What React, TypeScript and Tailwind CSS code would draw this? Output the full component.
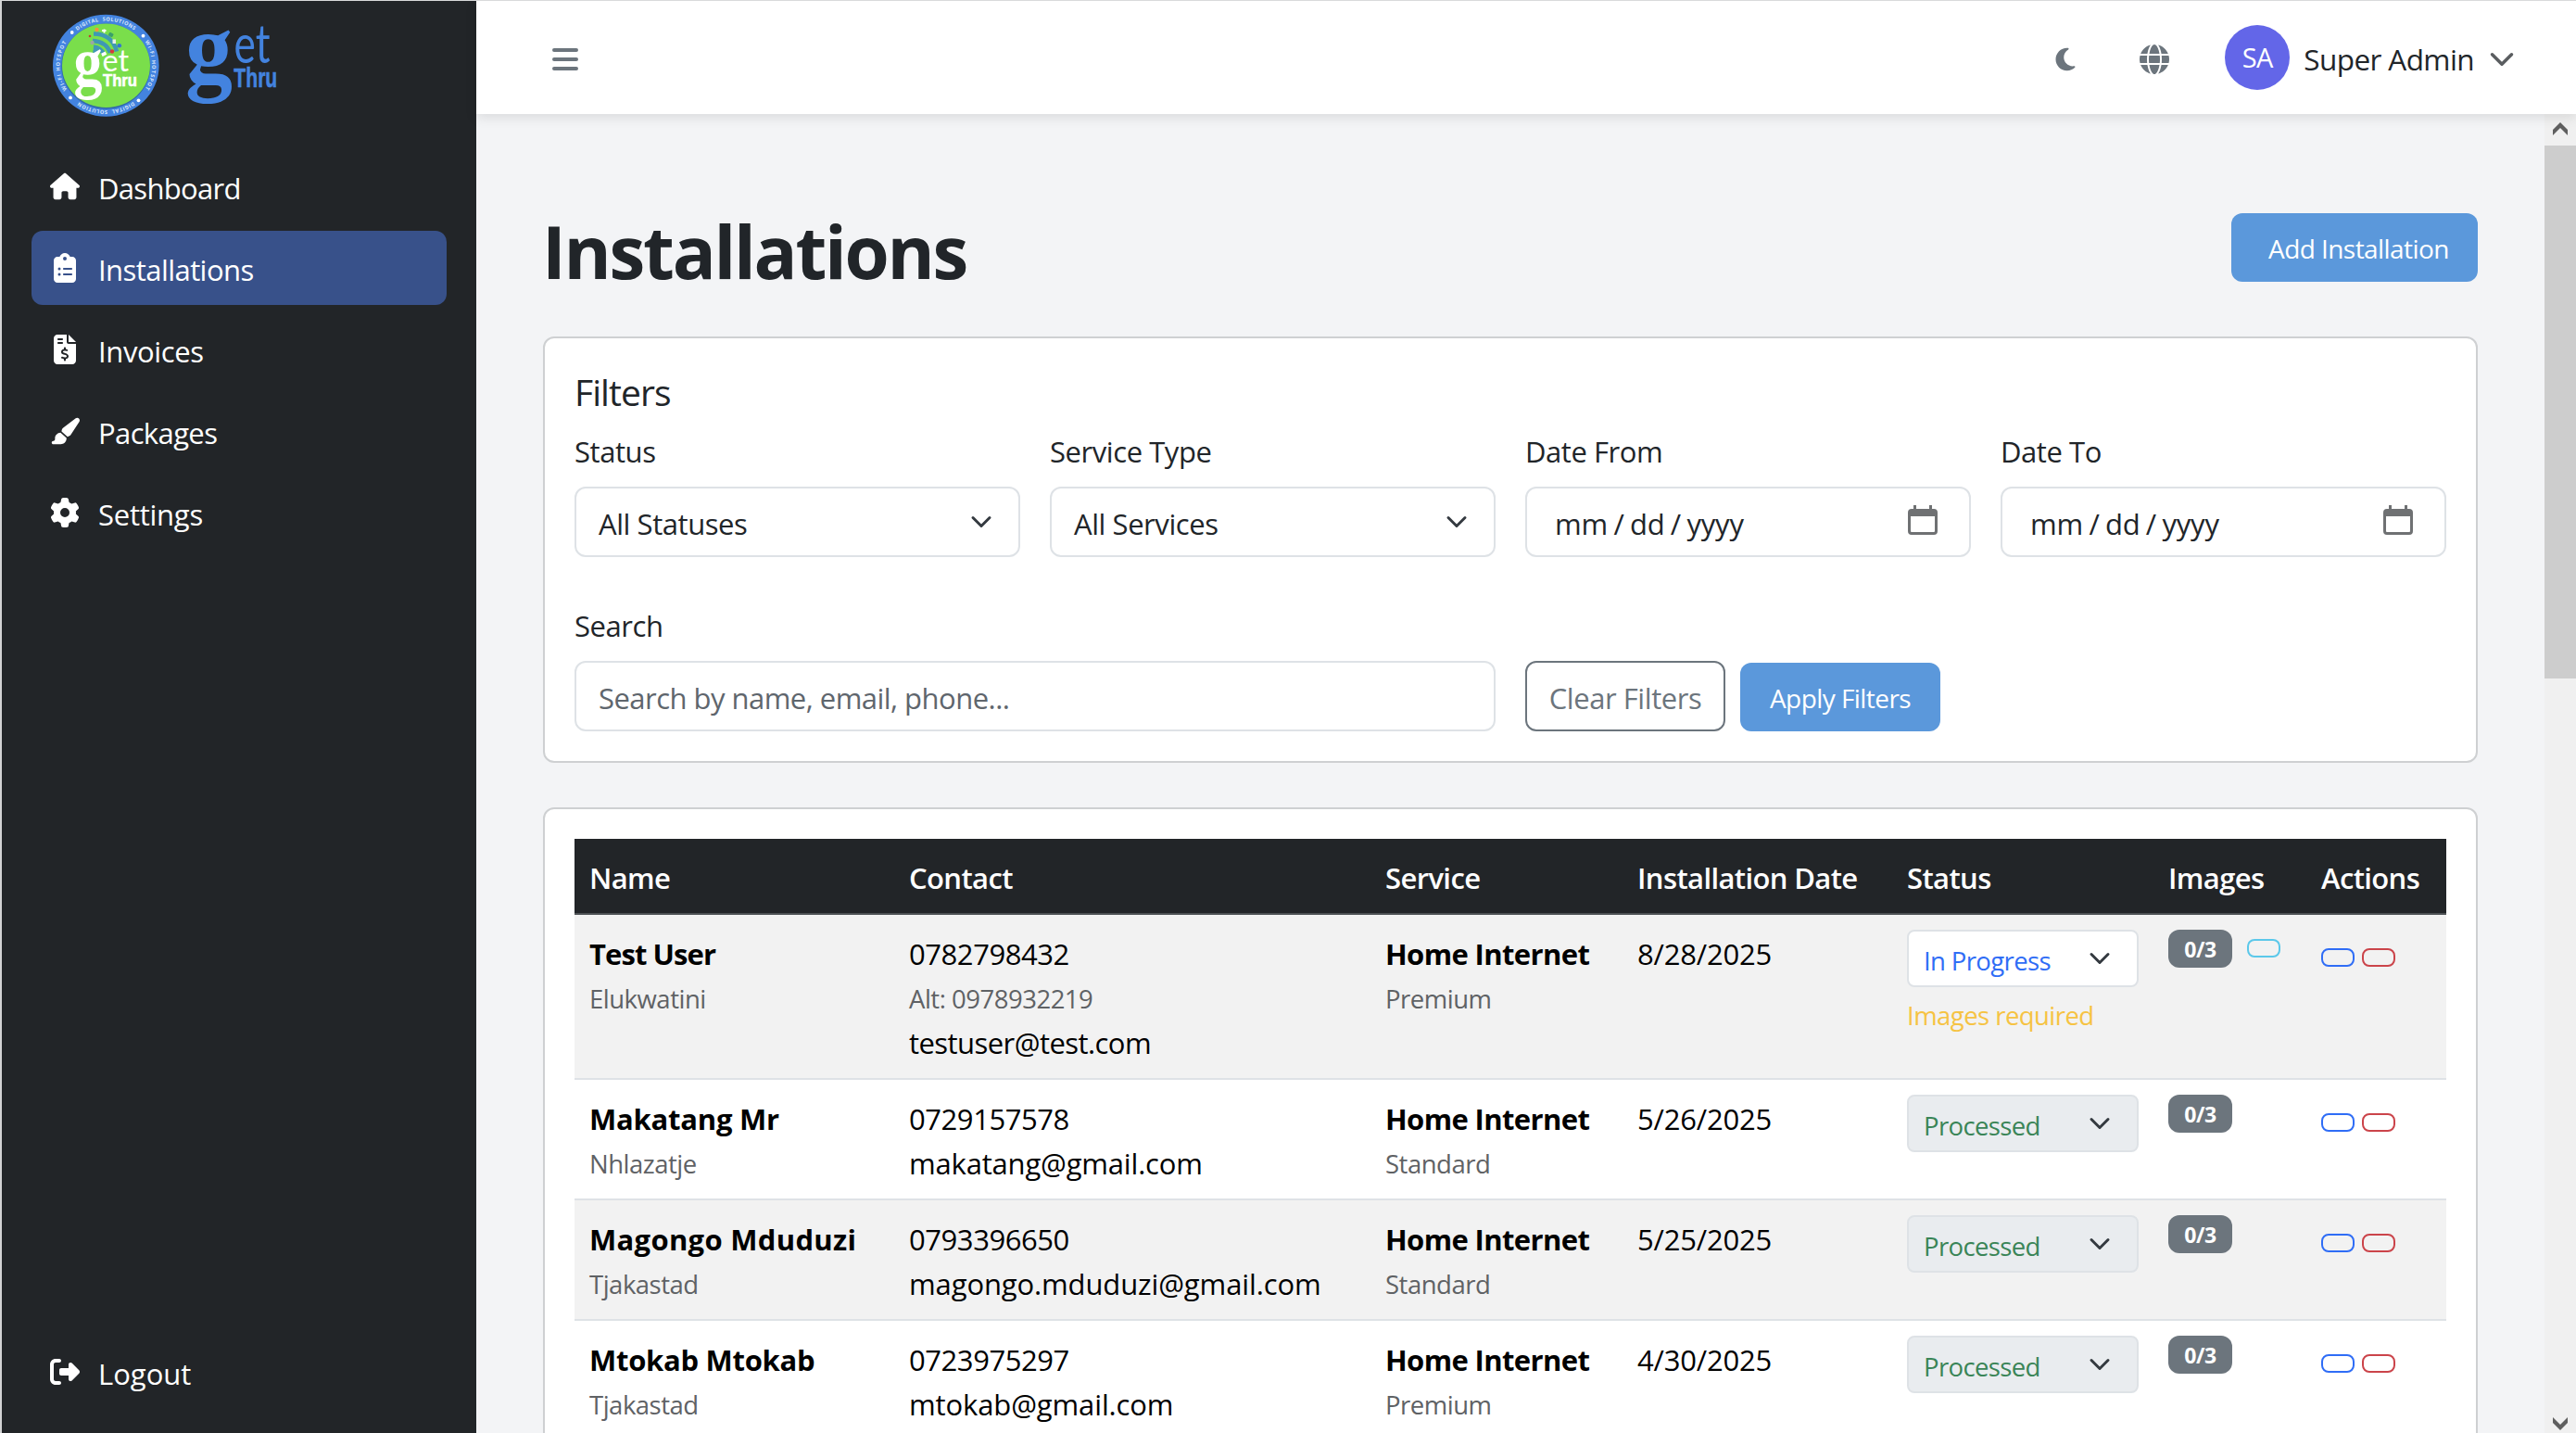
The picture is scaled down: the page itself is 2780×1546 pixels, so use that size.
import React from "react";
import { FaHouse, FaClipboardList, FaFileInvoiceDollar, FaPaintbrush, FaGear, FaRightFromBracket, FaMoon, FaGlobe } from "react-icons/fa6";

const nav = [
  { label: "Dashboard", icon: FaHouse, cls: "tracking-[-0.022em]" },
  { label: "Installations", icon: FaClipboardList, active: true, cls: "tracking-[-0.018em]" },
  { label: "Invoices", icon: FaFileInvoiceDollar, cls: "tracking-[-0.012em]" },
  { label: "Packages", icon: FaPaintbrush, cls: "tracking-[-0.02em]" },
  { label: "Settings", icon: FaGear, cls: "tracking-[-0.008em]" },
];

const rows = [
  { name: "Test User", nameCls: "tracking-[-0.03em]", town: "Elukwatini", phone: "0782798432", alt: "Alt: 0978932219", mail: "testuser@test.com", mailCls: "tracking-[-0.018em]", plan: "Premium", date: "8/28/2025", open: true },
  { name: "Makatang Mr", nameCls: "tracking-[-0.007em]", town: "Nhlazatje", phone: "0729157578", mail: "makatang@gmail.com", mailCls: "tracking-[-0.006em]", plan: "Standard", date: "5/26/2025" },
  { name: "Magongo Mduduzi", nameCls: "tracking-[0.01em]", town: "Tjakastad", phone: "0793396650", mail: "magongo.mduduzi@gmail.com", mailCls: "tracking-[-0.004em]", plan: "Standard", date: "5/25/2025" },
  { name: "Mtokab Mtokab", nameCls: "tracking-[-0.009em]", town: "Tjakastad", phone: "0723975297", mail: "mtokab@gmail.com", mailCls: "tracking-[-0.004em]", plan: "Premium", date: "4/30/2025" },
];

function Chevron({ className = "", w = 24 }: { className?: string; w?: number }) {
  return (
    <svg viewBox="0 0 16 16" width={w} height={w} fill="none" stroke="currentColor" strokeWidth="2" strokeLinecap="round" strokeLinejoin="round" className={className}>
      <path d="m2 5 6 6 6-6" />
    </svg>
  );
}

function Calendar() {
  return (
    <svg width="32" height="32" viewBox="0 0 32 32" fill="#6f7173" className="mb-1">
      <path fillRule="evenodd" d="M6 0h3v4h14V0h3v4h2a4 4 0 0 1 4 4v20a4 4 0 0 1-4 4H4a4 4 0 0 1-4-4V8a4 4 0 0 1 4-4h2zM3 12v16a1 1 0 0 0 1 1h24a1 1 0 0 0 1-1V12z" />
    </svg>
  );
}

function Wordmark({ g, et, thru, fill }: { g: number[]; et: number[]; thru: number[]; fill: string }) {
  return (
    <g fill={fill}>
      <text x={g[0]} y={g[1]} fontSize={g[2]} textLength={g[3]} lengthAdjust="spacingAndGlyphs" fontFamily="Liberation Serif" fontWeight="700">g</text>
      <text x={et[0]} y={et[1]} fontSize={et[2]} textLength={et[3]} lengthAdjust="spacingAndGlyphs" fontFamily="Lato">et</text>
      <text x={thru[0]} y={thru[1]} fontSize={thru[2]} textLength={thru[3]} lengthAdjust="spacingAndGlyphs" fontFamily="Liberation Sans" fontWeight="700" stroke={fill} strokeWidth="0.600">Thru</text>
    </g>
  );
}

function Logo() {
  return (
    <svg width="320" height="130" viewBox="2 1 320 130" className="block tracking-normal">
      <defs>
        <path id="ringFromBottom" d="M114.300 119a49.500 48 0 0 1 0-96.500a49.500 48 0 0 1 0 96.500" />
        <path id="ringFromTop" d="M114.300 22.500a49.500 48 0 0 1 0 96.500a49.500 48 0 0 1 0-96.500" />
      </defs>
      <ellipse cx="114.300" cy="70.700" rx="57.300" ry="55" fill="#4383df" />
      <ellipse cx="114.300" cy="71.500" rx="48" ry="46" fill="#3268a8" />
      <ellipse cx="114.500" cy="70.700" rx="47.500" ry="45.200" fill="#7ade4b" />
      <g fill="#dbe8fb" fontFamily="Open Sans" fontWeight="700" fontSize="5.600" textAnchor="middle">
        <text letterSpacing="0.500"><textPath href="#ringFromBottom" startOffset="50%">DIGITAL &#160;SOLUTIONS</textPath></text>
        <text letterSpacing="1"><textPath href="#ringFromBottom" startOffset="25%">WI-FI HOTSPOT</textPath></text>
        <text letterSpacing="1"><textPath href="#ringFromBottom" startOffset="75%">WI-FI HOTSPOT</textPath></text>
        <text letterSpacing="0.500"><textPath href="#ringFromTop" startOffset="50%">DIGITAL &#160;SOLUTION</textPath></text>
      </g>
      <g fill="#fff">
        <circle cx="77.700" cy="35" r="1.900" /><circle cx="154.500" cy="38.700" r="1.900" />
        <circle cx="76" cy="105.400" r="1.900" /><circle cx="149.500" cy="108.300" r="1.900" />
      </g>
      <g fill="none" stroke="#3f98b4" strokeWidth="4.500">
        <path d="M101 36.500q20 0 25 19" />
        <path d="M100 44q15 1 19 13" />
        <path d="M101 50.500q8 1 11 8" />
      </g>
      <circle cx="103.500" cy="55.500" r="3.200" fill="#3f98b4" />
      <circle cx="104.500" cy="32" r="2.200" fill="#f2953a" />
      <path d="M110 33h4.500M112.500 31.500v4" stroke="#fff" strokeWidth="1.800" />
      <rect x="117.500" y="35.500" width="5" height="4" rx="1" fill="#3aa06a" transform="rotate(30 120 37)" />
      <rect x="121.500" y="42.500" width="3.500" height="4.500" fill="#e9efe6" />
      <circle cx="128.800" cy="49.300" r="2.300" fill="#3577cf" />
      <circle cx="121" cy="55.500" r="2.200" fill="#d63a3a" />
      <circle cx="99.500" cy="46" r="2.200" fill="#9ba8a0" />
      <circle cx="97" cy="39" r="1.300" fill="#c4402f" />
      <rect x="109.500" y="56.500" width="5" height="3.600" fill="#fff" transform="rotate(-25 112 58)" />
      <Wordmark fill="#fff" g={[79.5, 92, 74, 31]} et={[110.5, 76.7, 33, 28.5]} thru={[111, 93.3, 18.5, 37]} />
      <Wordmark fill="#4383df" g={[200, 87.5, 109, 51]} et={[252.5, 67.7, 58, 39]} thru={[252.3, 93.7, 29.5, 47]} />
    </svg>
  );
}

function Field({ label, children }: { label: string; children: React.ReactNode }) {
  return (
    <div className="flex flex-col">
      <div className="mb-4 h-12 leading-[52px]">{label}</div>
      {children}
    </div>
  );
}

function Select({ text }: { text: string }) {
  return (
    <div className="flex h-[76px] items-center justify-between rounded-xl border-2 border-[#dee2e6] bg-white pl-6 pr-7">
      <span className="relative top-[2px]">{text}</span>
      <Chevron className="text-[#343a40]" />
    </div>
  );
}

function DateInput() {
  return (
    <div className="flex h-[76px] items-center justify-between rounded-xl border-2 border-[#dee2e6] bg-white pl-[30px] pr-[34px]">
      <span className="relative top-[2px] tracking-[-0.006em] [word-spacing:-1.5px]">mm / dd / yyyy</span>
      <Calendar />
    </div>
  );
}

function Sub({ children }: { children: React.ReactNode }) {
  return <div className="h-12 text-[27.5px] leading-[54px] tracking-[-0.018em] text-[#5f6265]">{children}</div>;
}

export default function App() {
  return (
    <div className="flex h-[1546px] w-[2780px] overflow-hidden border-l-2 border-t border-l-[#d2d3d4] border-t-[#d9dadb] bg-[#f3f4f6] font-['Open_Sans',sans-serif] text-[31px] leading-[48px] tracking-[-0.014em] text-[#212529]">
      <aside className="flex w-[512px] shrink-0 flex-col bg-[#222528] text-white">
        <div className="h-[160px]"><Logo /></div>
        <nav className="flex flex-col gap-2 px-8">
          {nav.map(({ label, icon: Icon, active, cls }) => (
            <div key={label} className={"flex h-20 items-center rounded-xl pl-[18px] " + (active ? "bg-[#38518a]" : "")}>
              <span className="flex w-9 justify-center"><Icon size={32} /></span>
              <span className={"relative top-[2px] ml-[18px] " + cls}>{label}</span>
            </div>
          ))}
        </nav>
        <div className="mx-8 mb-[26px] mt-auto flex h-20 items-center pl-[18px]">
          <span className="flex w-9 justify-center"><FaRightFromBracket size={32} /></span>
          <span className="relative top-[2px] ml-[18px] tracking-normal">Logout</span>
        </div>
      </aside>

      <div className="flex min-w-0 flex-1 flex-col">
        <header className="z-10 flex h-[122px] shrink-0 items-center bg-white pl-20 pr-[66px] shadow-[0_4px_12px_rgba(0,0,0,0.1)]">
          <svg width="32" height="32" viewBox="0 0 32 32" stroke="#6c757d" strokeWidth="4" strokeLinecap="round" className="mt-1"><path d="M4 6h24M4 16h24M4 26h24" /></svg>
          <div className="ml-auto mt-1 flex items-center text-[#6c757d]">
            <FaMoon size={28} />
            <FaGlobe size={32} className="ml-[66px]" />
          </div>
          <div className="ml-[60px] flex size-[70px] items-center justify-center rounded-full bg-[#6366e8] text-[29px] tracking-[-0.02em] text-white">SA</div>
          <span className="relative top-[2px] ml-[15px] text-[31.5px] tracking-[-0.019em]">Super Admin</span>
          <Chevron w={28} className="ml-4 mt-1 text-[#5a5d60]" />
        </header>

        <div className="flex min-h-0 flex-1">
          <main className="min-w-0 flex-1 overflow-hidden px-[72px] pt-[100px]">
            <div className="flex h-[140px] justify-between">
              <h1 className="-ml-px text-[78px] font-bold leading-[96px] tracking-[-0.029em]">Installations</h1>
              <div className="mt-[7px] flex h-[74px] w-[266px] items-center rounded-xl bg-[#5b98db] pl-10 pt-[2px] text-[28px] tracking-[-0.02em] text-white"><span>Add Installation</span></div>
            </div>

            <section className="h-[460px] rounded-xl border-2 border-[#ced0d2] bg-white px-8 pt-8">
              <h2 className="h-12 text-[39px] leading-[52px] tracking-[-0.024em]">Filters</h2>
              <div className="mt-4 grid grid-cols-4 gap-x-8">
                <Field label="Status"><Select text="All Statuses" /></Field>
                <Field label="Service Type"><Select text="All Services" /></Field>
                <Field label="Date From"><DateInput /></Field>
                <Field label="Date To"><DateInput /></Field>
              </div>
              <div className="mt-12 grid grid-cols-2 gap-x-8">
                <Field label="Search">
                  <div className="flex h-[76px] items-center rounded-xl border-2 border-[#dee2e6] pl-6 tracking-[-0.017em] text-[#5f666d]"><span className="relative top-[2px]">Search by name, email, phone...</span></div>
                </Field>
                <div className="flex items-end gap-4">
                  <div className="flex h-[76px] w-[216px] items-center justify-center rounded-xl border-2 border-[#6c757d] pt-[3px] text-[#6c757d]">Clear Filters</div>
                  <div className="flex h-[74px] w-[216px] items-center justify-center rounded-xl bg-[#5b98db] pt-[2px] text-[28px] tracking-[-0.02em] text-white">Apply Filters</div>
                </div>
              </div>
            </section>

            <section className="mt-12 rounded-xl border-2 border-[#ced0d2] bg-white p-8">
              <table className="w-full table-fixed border-separate border-spacing-0 text-left text-black">
                <colgroup>
                  <col className="w-[345px]" /><col className="w-[514px]" /><col className="w-[272px]" /><col className="w-[291px]" /><col className="w-[282px]" /><col className="w-[165px]" /><col className="w-[151px]" />
                </colgroup>
                <thead>
                  <tr className="bg-[#222528] text-white">
                    {["Name", "Contact", "Service", "Installation Date", "Status", "Images", "Actions"].map((h) => (
                      <th key={h} className="h-[82px] whitespace-nowrap border-b-2 border-[#4d5154] px-4 pb-0 pt-1 font-semibold tracking-[-0.02em]">{h}</th>
                    ))}
                  </tr>
                </thead>
                <tbody>
                  {rows.map((r) => (
                    <tr key={r.name} className="align-top odd:bg-[#f2f2f2] [&>td]:border-b-2 [&>td]:border-[#dee2e6] [&>td]:p-4">
                      <td><div className={"h-12 font-bold leading-[52px] " + r.nameCls}>{r.name}</div><Sub>{r.town}</Sub></td>
                      <td>
                        <div className="h-12 leading-[52px]">{r.phone}</div>
                        {r.alt && <Sub>{r.alt}</Sub>}
                        <div className={"h-12 leading-[52px] " + r.mailCls}>{r.mail}</div>
                      </td>
                      <td><div className="h-12 font-bold leading-[52px] tracking-[-0.02em]">Home Internet</div><Sub>{r.plan}</Sub></td>
                      <td className="leading-[52px] tracking-[-0.006em]"><div className="h-12">{r.date}</div></td>
                      <td>
                        <div className={"flex h-[62px] items-center justify-between rounded-lg border-2 border-[#dee2e6] pl-4 pr-[28px] text-[27.5px] tracking-[-0.023em] " + (r.open ? "bg-white text-[#2f6df6]" : "bg-[#e9ecef] text-[#3a8557]")}>
                          <span className="relative top-[3px]">{r.open ? "In Progress" : "Processed"}</span>
                          <Chevron className="text-[#343a40]" />
                        </div>
                        {r.open && <div className="h-[34px] pt-[10px] text-[27.5px] leading-[42px] tracking-[-0.02em] text-[#f6c343]">Images required</div>}
                      </td>
                      <td>
                        <div className="flex gap-4">
                          <span className="flex h-[41px] w-[69px] items-center justify-center rounded-xl bg-[#6c757d] text-[23px] font-bold text-white">0/3</span>
                          {r.open && <span className="mt-[10px] h-5 w-9 rounded-lg border-2 border-[#5bc8ea]" />}
                        </div>
                      </td>
                      <td>
                        <div className="mt-5 flex gap-2">
                          <span className="h-5 w-9 rounded-lg border-2 border-[#2f6df6]" />
                          <span className="h-5 w-9 rounded-lg border-2 border-[#cb444a]" />
                        </div>
                      </td>
                    </tr>
                  ))}
                </tbody>
              </table>
            </section>
          </main>

          <div className="flex w-[34px] shrink-0 flex-col items-center bg-[#f0f0f0] text-[#5f5f5f]">
            <svg width="34" height="34" viewBox="0 0 34 34" fill="currentColor"><path d="m17 9 8 8v6l-8-8-8 8v-6z" /></svg>
            <div className="h-[575px] w-full bg-[#cdcdcd]" />
            <svg width="34" height="34" viewBox="0 0 34 34" fill="currentColor" className="mt-auto"><path d="m17 31 8-8v-6l-8 8-8-8v6z" /></svg>
          </div>
        </div>
      </div>
    </div>
  );
}
